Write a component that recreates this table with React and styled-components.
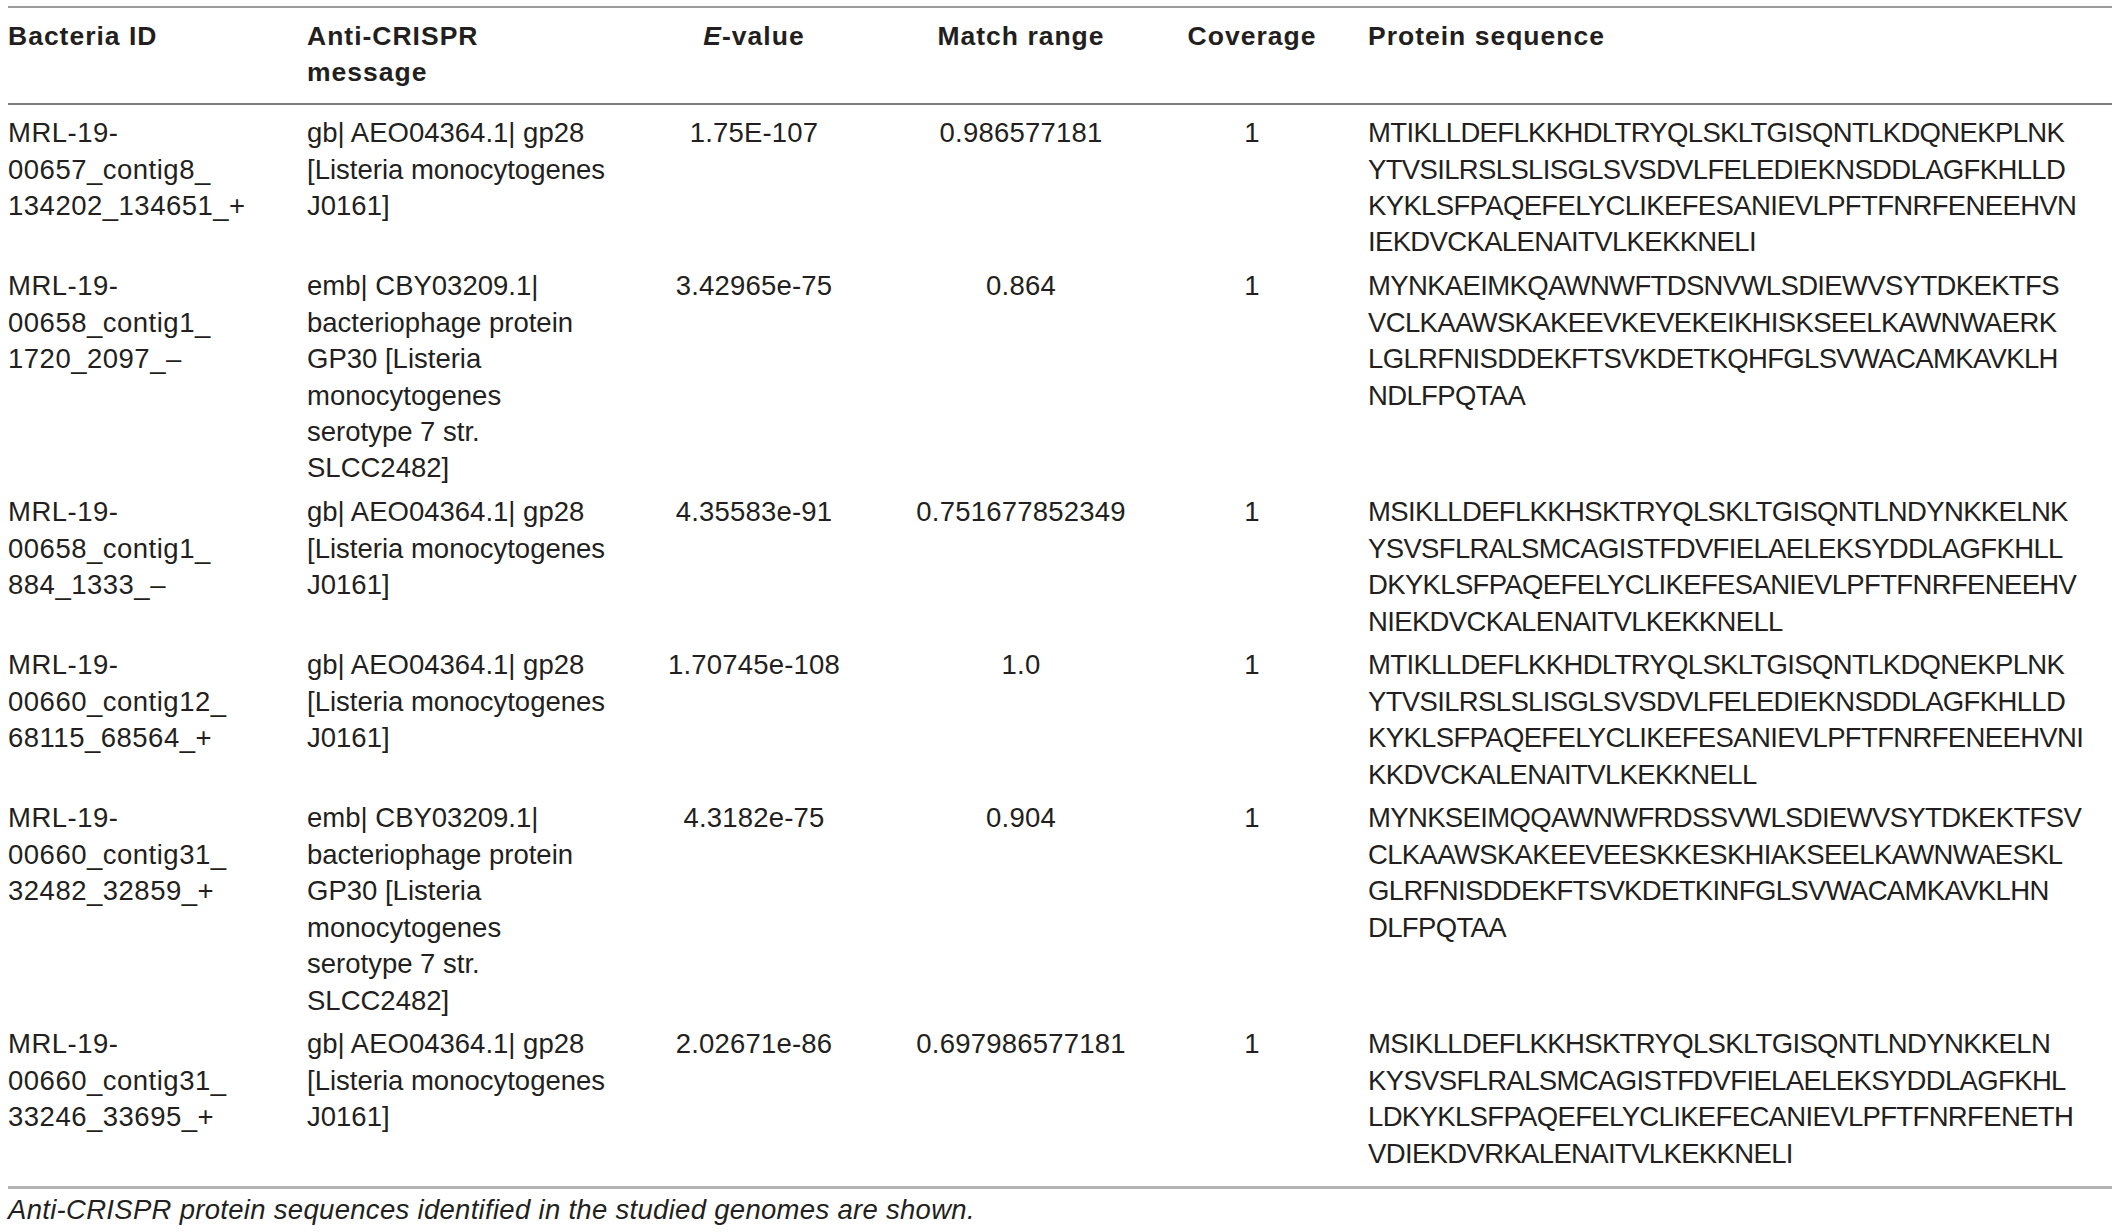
import React from "react";
import styled, { createGlobalStyle } from "styled-components";

const GlobalStyle = createGlobalStyle`
  body {
    margin: 0;
    background: #fff;
  }
`;

const COLS = "299px 337px 220px 314px 148px 1fr";

const rows = [
  {
    id: ["MRL-19-", "00657_contig8_", "134202_134651_+"],
    msg: ["gb| AEO04364.1| gp28", "[Listeria monocytogenes", "J0161]"],
    evalue: "1.75E-107",
    range: "0.986577181",
    coverage: "1",
    seq: [
      "MTIKLLDEFLKKHDLTRYQLSKLTGISQNTLKDQNEKPLNK",
      "YTVSILRSLSLISGLSVSDVLFELEDIEKNSDDLAGFKHLLD",
      "KYKLSFPAQEFELYCLIKEFESANIEVLPFTFNRFENEEHVN",
      "IEKDVCKALENAITVLKEKKNELI",
    ],
  },
  {
    id: ["MRL-19-", "00658_contig1_", "1720_2097_\u2013"],
    msg: [
      "emb| CBY03209.1|",
      "bacteriophage protein",
      "GP30 [Listeria",
      "monocytogenes",
      "serotype 7 str.",
      "SLCC2482]",
    ],
    evalue: "3.42965e-75",
    range: "0.864",
    coverage: "1",
    seq: [
      "MYNKAEIMKQAWNWFTDSNVWLSDIEWVSYTDKEKTFS",
      "VCLKAAWSKAKEEVKEVEKEIKHISKSEELKAWNWAERK",
      "LGLRFNISDDEKFTSVKDETKQHFGLSVWACAMKAVKLH",
      "NDLFPQTAA",
    ],
  },
  {
    id: ["MRL-19-", "00658_contig1_", "884_1333_\u2013"],
    msg: ["gb| AEO04364.1| gp28", "[Listeria monocytogenes", "J0161]"],
    evalue: "4.35583e-91",
    range: "0.751677852349",
    coverage: "1",
    seq: [
      "MSIKLLDEFLKKHSKTRYQLSKLTGISQNTLNDYNKKELNK",
      "YSVSFLRALSMCAGISTFDVFIELAELEKSYDDLAGFKHLL",
      "DKYKLSFPAQEFELYCLIKEFESANIEVLPFTFNRFENEEHV",
      "NIEKDVCKALENAITVLKEKKNELL",
    ],
  },
  {
    id: ["MRL-19-", "00660_contig12_", "68115_68564_+"],
    msg: ["gb| AEO04364.1| gp28", "[Listeria monocytogenes", "J0161]"],
    evalue: "1.70745e-108",
    range: "1.0",
    coverage: "1",
    seq: [
      "MTIKLLDEFLKKHDLTRYQLSKLTGISQNTLKDQNEKPLNK",
      "YTVSILRSLSLISGLSVSDVLFELEDIEKNSDDLAGFKHLLD",
      "KYKLSFPAQEFELYCLIKEFESANIEVLPFTFNRFENEEHVNI",
      "KKDVCKALENAITVLKEKKNELL",
    ],
  },
  {
    id: ["MRL-19-", "00660_contig31_", "32482_32859_+"],
    msg: [
      "emb| CBY03209.1|",
      "bacteriophage protein",
      "GP30 [Listeria",
      "monocytogenes",
      "serotype 7 str.",
      "SLCC2482]",
    ],
    evalue: "4.3182e-75",
    range: "0.904",
    coverage: "1",
    seq: [
      "MYNKSEIMQQAWNWFRDSSVWLSDIEWVSYTDKEKTFSV",
      "CLKAAWSKAKEEVEESKKESKHIAKSEELKAWNWAESKL",
      "GLRFNISDDEKFTSVKDETKINFGLSVWACAMKAVKLHN",
      "DLFPQTAA",
    ],
  },
  {
    id: ["MRL-19-", "00660_contig31_", "33246_33695_+"],
    msg: ["gb| AEO04364.1| gp28", "[Listeria monocytogenes", "J0161]"],
    evalue: "2.02671e-86",
    range: "0.697986577181",
    coverage: "1",
    seq: [
      "MSIKLLDEFLKKHSKTRYQLSKLTGISQNTLNDYNKKELN",
      "KYSVSFLRALSMCAGISTFDVFIELAELEKSYDDLAGFKHL",
      "LDKYKLSFPAQEFELYCLIKEFECANIEVLPFTFNRFENETH",
      "VDIEKDVRKALENAITVLKEKKNELI",
    ],
  },
];

const Page = styled.main`
  padding: 6px 8px 0;
  font-family: "Liberation Sans", Arial, Helvetica, sans-serif;
  color: #231f20;
`;

const Table = styled.section`
  border-top: 2px solid #9b9b9b;
`;

const HeadRow = styled.div`
  display: grid;
  grid-template-columns: ${COLS};
  padding: 10px 0 12px;
  border-bottom: 2px solid #7d7d7d;
  font-size: 26.5px;
  font-weight: 700;
  letter-spacing: 1px;
  line-height: 36.45px;
`;

const HeadCell = styled.div`
  text-align: ${(p) => (p.$center ? "center" : "left")};
  padding-left: ${(p) => (p.$indent ? "42px" : "0")};
  white-space: nowrap;

  em {
    font-style: italic;
  }
`;

const Body = styled.div`
  padding: 6.5px 0 10.5px;
  border-bottom: 3px solid #b3b3b3;
`;

const Row = styled.div`
  display: grid;
  grid-template-columns: ${COLS};
  padding: 3.65px 0;
  font-size: 27.5px;
  line-height: 36.45px;
`;

const IdCell = styled.div`
  letter-spacing: 0.5px;
  white-space: nowrap;
`;

const MsgCell = styled.div`
  white-space: nowrap;
`;

const NumCell = styled.div`
  text-align: center;
  letter-spacing: 0.2px;
  white-space: nowrap;
`;

const SeqCell = styled.div`
  padding-left: 42px;
  letter-spacing: -0.65px;
  white-space: nowrap;
`;

const Line = styled.span`
  display: block;
`;

const Caption = styled.p`
  margin: 3px 0 0;
  font-size: 27.5px;
  font-style: italic;
  letter-spacing: 0.3px;
  line-height: 36.45px;
`;

const Lines = ({ items }) => items.map((t, i) => <Line key={i}>{t}</Line>);

export default function App() {
  return (
    <>
      <GlobalStyle />
      <Page>
        <Table>
          <HeadRow>
            <HeadCell>Bacteria ID</HeadCell>
            <HeadCell>
              <Line>Anti-CRISPR</Line>
              <Line>message</Line>
            </HeadCell>
            <HeadCell $center>
              <em>E</em>-value
            </HeadCell>
            <HeadCell $center>Match range</HeadCell>
            <HeadCell $center>Coverage</HeadCell>
            <HeadCell $indent>Protein sequence</HeadCell>
          </HeadRow>
          <Body>
            {rows.map((r, i) => (
              <Row key={i}>
                <IdCell>
                  <Lines items={r.id} />
                </IdCell>
                <MsgCell>
                  <Lines items={r.msg} />
                </MsgCell>
                <NumCell>{r.evalue}</NumCell>
                <NumCell>{r.range}</NumCell>
                <NumCell>{r.coverage}</NumCell>
                <SeqCell>
                  <Lines items={r.seq} />
                </SeqCell>
              </Row>
            ))}
          </Body>
        </Table>
        <Caption>
          Anti-CRISPR protein sequences identified in the studied genomes are
          shown.
        </Caption>
      </Page>
    </>
  );
}
